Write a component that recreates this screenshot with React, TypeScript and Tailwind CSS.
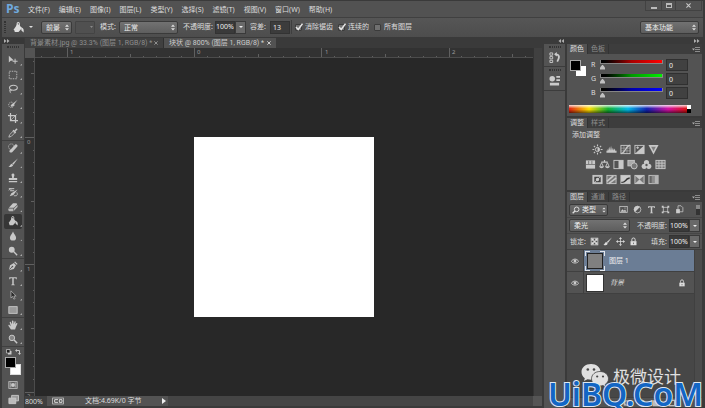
import React from "react";
import type { ReactNode } from "react";

const FONT = "font-['Noto_Sans','Noto_Sans_CJK_SC',sans-serif]";

function Glyph({ children, className = "size-[11px]", box = 12 }: { children: ReactNode; className?: string; box?: number }) {
  return (
    <svg viewBox={`0 0 ${box} ${box}`} className={`shrink-0 ${className}`} fill="none" stroke="currentColor" strokeWidth="1" aria-hidden="true">
      {children}
    </svg>
  );
}

const F = { fill: "currentColor", stroke: "none" };

const bucket = (
  <>
    <path d="M5 2 10 6.500 6 11H2L1 8z" {...F} />
    <path d="M4.500 6V1.800a1.200 1.200 0 0 1 2.400 0V5" strokeWidth="1.200" />
    <path d="M9.300 6c2.500 1 2.700 3 2.200 5.500L9 9z" {...F} />
  </>
);

type Tool = { name: string; icon: ReactNode };

const toolGroups: { height: string; tools: Tool[] }[] = [
  {
    height: "h-[88px]",
    tools: [
      { name: "移动", icon: <><path d="M1 1v8l2.200-2L7 6.500z" {...F} /><path d="M8.500 4.500v6M5.500 7.500h6" strokeWidth="1.200" /></> },
      { name: "选框", icon: <rect x="1.500" y="1.500" width="9" height="9" strokeDasharray="1.800 1.200" /> },
      { name: "套索", icon: <><ellipse cx="6.500" cy="4.500" rx="4.700" ry="3" strokeWidth="1.300" /><path d="M2.500 6.500c-1.500 1 .5 2.500 1.500 1.500s-1-2-1.500-.5c-.5 1.500 0 2.500 1 3.500" /></> },
      { name: "快速选择", icon: <><circle cx="4" cy="7" r="3.200" strokeDasharray="1.400 1" /><path d="M11.500 1 7 7 4 9.500 4.500 6.500z" {...F} /><path d="M3 8c2 2 4 1 4.500-1L5.500 5.500z" {...F} /></> },
      { name: "裁剪", icon: <><path d="M3 0v9h9M0 3h9v9" strokeWidth="1.500" /><path d="M3.500 8.500 10.500 1.500" strokeWidth=".8" /></> },
      { name: "吸管", icon: <><path d="M1 11l1-3 4-4 2 2-4 4z" strokeWidth="1" /><path d="M5.500 3l1.200-.8L8 3l1.500-2c1-1 2.500.5 1.500 1.500L9 4l.8 1.300L8.500 6.500z" {...F} /></> },
    ],
  },
  {
    height: "h-[118px]",
    tools: [
      { name: "修复画笔", icon: <><circle cx="4" cy="4.500" r="3.400" strokeDasharray="1.400 1" /><path d="M2 9 8.500 2c1.500-1.500 4 1 2.500 2.500L5 11c-1.500 1.500-4.500-.5-3-2z" {...F} /></> },
      { name: "画笔", icon: <><path d="M11.800.5 6.500 8 5 6.500z" {...F} /><path d="M4.500 6.800 6.200 8.500C5.500 11 3 11 .5 10.800 2.500 10 2 7.500 4.500 6.800z" {...F} /></> },
      { name: "图章", icon: <path d="M4.300 1.500c1-1.500 3-1 3.400.5.200 1-.7 2-.7 4h4v2.500H1V6h4c0-2-1-3-.7-4.500zM1 9.500h10V11H1z" {...F} /> },
      { name: "历史画笔", icon: <><path d="M11.500 3 6.500 9.500 2 11l2-3.500z" {...F} /><path d="M1 2h6.500M2.500 4.500h5M1 4c1-2 2-2 3-1" strokeWidth="1.200" /><path d="M7 10.500h3c1.500-1 1.500-2.500.5-4" /></> },
      { name: "橡皮擦", icon: <><path d="M6 1.500h3.500c1.500 0 2 1 1 2L7 7H1z" {...F} /><path d="M.5 7.700h6V11H2C.5 11 0 9 .5 7.700zM7.300 7.500 11.500 3.500v2.500L7.300 10.500z" {...F} opacity=".85" /></> },
      { name: "油漆桶", icon: bucket },
      { name: "模糊", icon: <path d="M6 .5C7 4 9.700 5 9.700 8a3.700 3.500 0 0 1-7.400 0C2.300 5 5 4 6 .5z" {...F} /> },
      { name: "减淡", icon: <><circle cx="4.500" cy="4.500" r="3.500" {...F} /><path d="M7 7l4 4" strokeWidth="1.600" /></> },
    ],
  },
  {
    height: "h-[59px]",
    tools: [
      { name: "钢笔", icon: <><path d="M1 11 2.500 5 7 2.500 9.500 5 7 9.500z" {...F} /><path d="M7.500 1.500 8.500.5l3 3-1 1z" {...F} /><path d="M1.500 10.500 5 7" stroke="#535353" /><circle cx="5.300" cy="6.700" r="1" fill="#535353" stroke="none" /></> },
      { name: "文字", icon: <path d="M1.500 1.500h9V4h-.8L9 2.700H6.900V10l1.200.5v.5H3.900v-.5l1.200-.5V2.700H3L2.300 4h-.8z" {...F} /> },
      { name: "路径选择", icon: <path d="M3.500 1v8.500l2-1.800L7 11l1.500-.7L7 7.200h2.800z" fill="#2a2a2a" stroke="#c4c4c4" strokeWidth=".8" /> },
      { name: "矩形", icon: <rect x="1" y="2" width="10" height="8" fill="#9a9a9a" stroke="#cfcfcf" /> },
    ],
  },
  {
    height: "h-[29px]",
    tools: [
      { name: "抓手", icon: <path d="M3.500 11.500.5 6.800c-.3-1 .9-1.300 1.500-.6L3.300 7.500 2 3c-.2-1.100 1.200-1.300 1.500-.4L4.800 5 4.700 1.300c.1-1.100 1.600-1.100 1.800 0L6.800 5l1-3c.4-.9 1.600-.6 1.500.4L8.700 5.500l1.200-1.700c.7-.7 1.700-.1 1.300.9L9.500 8.500l-1 3z" {...F} /> },
      { name: "缩放", icon: <><circle cx="4.700" cy="4.700" r="3.300" fill="#858585" strokeWidth="1.200" /><path d="M7.300 7.300l3.700 3.700" strokeWidth="1.800" /></> },
    ],
  },
];

const menus = ["文件(F)", "编辑(E)", "图像(I)", "图层(L)", "类型(Y)", "选择(S)", "滤镜(T)", "视图(V)", "窗口(W)", "帮助(H)"];

function Select({ label, value, className }: { label: string; value: string; className: string }) {
  return (
    <div className={`relative h-[13px] shrink-0 ${className}`}>
      <select
        aria-label={label}
        className="block h-full w-full appearance-none rounded-[2px] border border-[#3a3a3a] bg-linear-to-b from-[#727272] to-[#5e5e5e] pl-1 leading-none text-[#eee] outline-none"
      >
        <option>{value}</option>
      </select>
      <svg viewBox="0 0 4 7" className="pointer-events-none absolute top-[3px] right-[3px] h-[7px] w-1 fill-[#ddd]">
        <path d="M0 2.700 2 .5l2 2.200zM0 4.300h4L2 6.500z" />
      </svg>
    </div>
  );
}

function PercentField({ label }: { label: string }) {
  return (
    <div className="flex h-[13px] w-[31px] shrink-0 items-stretch">
      <input aria-label={label} defaultValue="100%" className="w-5 min-w-0 border border-[#333] bg-[#3a3a3a] text-center text-[#eee] outline-none" />
      <button aria-label={`${label}滑块`} className="flex flex-1 items-center justify-center border border-[#3a3a3a] bg-[#696969]">
        <svg viewBox="0 0 4 2" className="h-[2px] w-1 fill-[#eee]"><path d="M0 0h4L2 2z" /></svg>
      </button>
    </div>
  );
}

function Check({ label, checked = false }: { label: string; checked?: boolean }) {
  return (
    <label className="flex shrink-0 items-center gap-[3px]">
      <span className="relative flex">
        <input type="checkbox" defaultChecked={checked} className="peer size-[7px] appearance-none rounded-[1px] border border-[#3b3b3b] bg-[#707070]" />
        <svg viewBox="0 0 8 8" className="pointer-events-none absolute -top-[1px] left-0 hidden size-2 fill-none stroke-[#e4e4e4] stroke-[1.5] peer-checked:block">
          <path d="M1 4l2.200 2.500L7.500.7" />
        </svg>
      </span>
      {label}
    </label>
  );
}

function Chevrons({ flip = false }: { flip?: boolean }) {
  return (
    <svg viewBox="0 0 6 4" className={`h-1 w-[6px] fill-[#b0b0b0] ${flip ? "rotate-180" : ""}`} aria-hidden="true">
      <path d="M0 0l2.500 2L0 4zM3 0l2.500 2L3 4z" />
    </svg>
  );
}

const UNIT = 127.3;

function TopRuler() {
  const ticks: ReactNode[] = [];
  for (let i = -12; i < 28; i++) {
    const x = Math.round(159 + (i * UNIT) / 10) + 0.5;
    const len = i % 10 === 0 ? 10 : i % 5 === 0 ? 4 : 2;
    ticks.push(<path key={i} d={`M${x} ${10 - len}V10`} />);
  }
  return (
    <svg className="h-[10px] min-w-0 flex-1 border-b border-[#4c4c4c] bg-[#323232]" aria-label="水平标尺">
      <g stroke="#606060">{ticks}</g>
      <g fill="#999" className="text-[6px]">
        <text x="35" y="6">1</text>
        <text x="162" y="6">0</text>
        <text x="290" y="6">1</text>
        <text x="417" y="6">2</text>
      </g>
    </svg>
  );
}

function SideRuler() {
  const ticks: ReactNode[] = [];
  for (let i = -6; i < 21; i++) {
    const y = Math.round(79 + (i * UNIT) / 10) + 0.5;
    const len = i % 10 === 0 ? 10 : i % 5 === 0 ? 4 : 2;
    ticks.push(<path key={i} d={`M${10 - len} ${y}H10`} />);
  }
  return (
    <svg className="w-[10px] shrink-0 self-stretch border-r border-[#4c4c4c] bg-[#323232]" aria-label="垂直标尺">
      <g stroke="#606060">{ticks}</g>
      <g fill="#999" className="text-[6px]">
        <text x="2" y="86">0</text>
        <text x="2" y="213">1</text>
        <text x="2" y="340">2</text>
      </g>
    </svg>
  );
}

function PanelTabs({ tabs }: { tabs: string[] }) {
  return (
    <div className="flex h-[10px] items-stretch bg-[#3d3d3d]">
      {tabs.map((t, i) => (
        <button key={t} className={`flex w-[21px] items-center justify-center border-r border-[#333] ${i === 0 ? "bg-[#535353] text-[#ddd]" : "text-[#8d8d8d]"}`}>
          {t}
        </button>
      ))}
      <button aria-label="面板菜单" className="mr-[2px] ml-auto flex items-center">
        <svg viewBox="0 0 8 5" className="h-[5px] w-2 fill-none stroke-[#8c8c8c]">
          <path d="M3 .5h5M3 2.500h5M3 4.500h5" /><path d="M0 1.500h3L1.500 3.500z" fill="#aaa" stroke="none" />
        </svg>
      </button>
    </div>
  );
}

function ColorRow({ name, track }: { name: string; track: string }) {
  return (
    <div className="flex h-3 items-center">
      <label htmlFor={`c-${name}`} className="w-[9px] text-[#ddd]">{name}</label>
      <div className="relative h-[10px] w-[63px]">
        <div className={`h-1 border-x border-b border-[#858585] ${track}`} />
        <input
          id={`c-${name}`}
          type="range"
          min="0"
          max="255"
          defaultValue="0"
          className="absolute inset-0 h-[10px] w-full appearance-none bg-transparent [&::-webkit-slider-thumb]:mt-[4px] [&::-webkit-slider-thumb]:size-[5px] [&::-webkit-slider-thumb]:appearance-none [&::-webkit-slider-thumb]:bg-[#c0c0c0] [&::-webkit-slider-thumb]:[clip-path:polygon(50%_0,100%_60%,100%_100%,0_100%,0_60%)]"
        />
      </div>
      <input aria-label={`${name} 数值`} defaultValue="0" className="ml-[3px] h-3 w-[22px] border border-[#303030] bg-[#414141] pl-[2px] text-[#eee] outline-none" />
    </div>
  );
}

const adjustRows: { name: string; icon: ReactNode }[][] = [
  [
    { name: "亮度/对比度", icon: <><circle cx="6" cy="6" r="2.300" /><path d="M6 3.700a2.300 2.300 0 0 1 0 4.600z" {...F} /><path d="M6 .5v2M6 9.500v2M.5 6h2M9.500 6h2M2 2l1.400 1.400M8.600 8.600 10 10M2 10l1.400-1.400M8.600 3.400 10 2" strokeWidth="1.200" /></> },
    { name: "色阶", icon: <path d="M.5 9.500V7l1 1V5.500l1 1.500 1-4 1 4 1-5 1 5 1-3 1 3 1-2 1 3 1-1v2.500z" {...F} /> },
    { name: "曲线", icon: <><rect x="1" y="1.500" width="10" height="9" /><path d="M1 4.500h10M1 7.500h10M4.300 1.500v9M7.600 1.500v9" strokeWidth=".5" /><path d="M1 10.500C6 10 6 2 11 1.500" strokeWidth="1.300" /></> },
    { name: "曝光度", icon: <><rect x="1" y="1.500" width="10" height="9" /><path d="M1 10.500 11 1.500v9z" {...F} /><path d="M2.500 4h3M4 2.500v3" /></> },
    { name: "自然饱和度", icon: <><path d="M.5 1h11L6 11.500z" {...F} /><path d="M3.500 3h5L6 8z" fill="#808080" stroke="none" /></> },
  ],
  [
    { name: "色相/饱和度", icon: <><rect x="1" y="1.500" width="10" height="9" {...F} /><path d="M1 6h10M4 2v4M7.500 2v4" stroke="#777" /></> },
    { name: "色彩平衡", icon: <><path d="M6 1v3M2.500 3.500h7" strokeWidth="1.300" /><path d="M2.800 4 .8 8.500h4zM9.200 4 7.200 8.500h4z" /><path d="M.5 8.500h4.600c-.5 2-4 2-4.600 0zM6.900 8.500h4.600c-.5 2-4 2-4.600 0z" {...F} /></> },
    { name: "黑白", icon: <><rect x="1" y="1.500" width="10" height="9" /><path d="M6 1.500h5v9H6z" {...F} /></> },
    { name: "照片滤镜", icon: <><rect x="1" y="1.500" width="7" height="6" fill="#aaa" /><circle cx="7.800" cy="7.500" r="3.300" fill="#777" /></> },
    { name: "通道混合器", icon: <><circle cx="6" cy="3.800" r="2.800" {...F} /><circle cx="3.500" cy="8" r="2.800" {...F} /><circle cx="8.500" cy="8" r="2.800" {...F} /><circle cx="6" cy="6.500" r="1.300" fill="#555" stroke="none" /></> },
    { name: "颜色查找", icon: <><rect x="1" y="1.500" width="10" height="9" fill="#777" /><path d="M1 4.500h10M1 7.500h10M4.300 1.500v9M7.600 1.500v9" /></> },
  ],
  [
    { name: "反相", icon: <><rect x="1" y="1.500" width="10" height="9" fill="#c6c6c6" /><path d="M2.500 9V3h6zM9.500 3v6h-6z" fill="#444" stroke="none" /><circle cx="6" cy="6" r="1.800" {...F} /></> },
    { name: "色调分离", icon: <><rect x="1" y="1.500" width="10" height="9" fill="#777" /><path d="M1 8 8 2M3 10.500l8-6" strokeWidth="1.800" /></> },
    { name: "阈值", icon: <><rect x="1" y="1.500" width="10" height="9" fill="#ccc" /><path d="M1.500 8.500c5 0 3.500-4 9-5v2C6.500 6 7 9.800 1.500 9.800z" fill="#333" stroke="none" /></> },
    { name: "可选颜色", icon: <><rect x="1" y="1.500" width="10" height="9" fill="#777" /><path d="M1 1.500h10L6 6zM1 10.500h10L6 6z" {...F} /></> },
    { name: "渐变映射", icon: <><rect x="1" y="1.500" width="10" height="9" fill="#666" /><path d="M4 2h7v8H4z" fill="#8c8c8c" stroke="none" /><path d="M7.500 2H11v8H7.500z" fill="#b5b5b5" stroke="none" /></> },
  ],
];

const pictureIcon = <><rect x="1" y="2" width="10" height="8" /><path d="M2 9l2.500-3.500L6.500 7.500 8 6l2 3z" {...F} /><circle cx="8" cy="4" r=".8" {...F} /></>;
const lockIcon = <><path d="M2 5.500h8V11H2z" {...F} /><path d="M3.800 5.500V3.500a2.200 2.200 0 0 1 4.400 0v2" strokeWidth="1.300" /><path d="M6 7.500v2" stroke="#555" /></>;

const filters: { name: string; icon: ReactNode }[] = [
  { name: "像素图层", icon: pictureIcon },
  { name: "调整图层", icon: <><circle cx="6" cy="6" r="4.500" /><path d="M2.800 9.200 9.200 2.800A4.500 4.500 0 0 0 2.800 9.200z" {...F} /></> },
  { name: "文字图层", icon: <path d="M1.500 1.500h9V4h-.8L9 2.900H7V10l1.200.5v.5H3.800v-.5L5 10V2.900H3L2.300 4h-.8z" {...F} /> },
  { name: "形状图层", icon: <><rect x="3" y="3" width="6" height="6" /><path d="M1 1h2.500v2.500H1zM8.500 1H11v2.500H8.500zM1 8.500h2.500V11H1zM8.500 8.500H11V11H8.500z" {...F} /></> },
  { name: "智能对象", icon: <><path d="M4 1h4l2.500 2.500V9H4z" /><path d="M1.500 5.500h5V11h-5z" {...F} /></> },
];

const locks: { name: string; icon: ReactNode }[] = [
  { name: "锁定透明像素", icon: <><rect x="1.500" y="1.500" width="9" height="9" /><path d="M2 2h3v3H2zM7 2h3v3H7zM4.500 4.500h3v3h-3zM2 7h3v3H2zM7 7h3v3H7z" {...F} /></> },
  { name: "锁定图像像素", icon: <><path d="M11.800.5 6.500 8 5 6.500z" {...F} /><path d="M4.500 6.800 6.200 8.500C5.500 11 3 11 .5 10.800 2.500 10 2 7.500 4.500 6.800z" {...F} /></> },
  { name: "锁定位置", icon: <><path d="M6 2v8M2 6h8" /><path d="M6 0l2 2.500H4zM6 12l2-2.500H4zM0 6l2.500-2v4zM12 6 9.500 4v4z" {...F} /></> },
  { name: "锁定全部", icon: lockIcon },
];

function Eye() {
  return (
    <button aria-label="图层可见性" className="flex w-[17px] shrink-0 items-center justify-center border-r border-[#404040] bg-[#535353] text-[#ccc]">
      <Glyph className="size-2"><path d="M.5 6.500c2.500-4.500 8.500-4.500 11 0-2.500 3.500-8.500 3.500-11 0z" strokeWidth="1.300" /><circle cx="6" cy="6" r="2.200" {...F} /></Glyph>
    </button>
  );
}

function Grip() {
  return <div className="mx-auto h-[2px] w-3 border-y border-dotted border-[#333]" />;
}

export default function App() {
  return (
    <div className={`relative flex min-h-screen flex-col border-x-2 border-t border-[#3a3a3a] bg-[#3a3a3a] text-[7px] leading-[10px] text-[#ddd] ${FONT}`}>
      <header className="flex h-[17px] shrink-0 items-center border-b border-[#404040] bg-[#525252]">
        <span className="ml-1 w-[22px] font-['Open_Sans',sans-serif] text-[12px] leading-4 font-bold text-[#70a9dd]">Ps</span>
        <nav className="flex gap-[9px] pt-[2px]">
          {menus.map((m) => <button key={m} className="whitespace-nowrap">{m}</button>)}
        </nav>
        <div className="mr-px ml-auto flex h-[10px] self-start border border-t-0 border-[#424242] text-[#c8c8c8]">
          <button aria-label="最小化" className="flex w-4 items-center justify-center border-r border-[#424242]"><span className="mt-1 h-[2px] w-[6px] bg-[#bbb]" /></button>
          <button aria-label="还原" className="flex w-[14px] items-center justify-center border-r border-[#424242]"><span className="h-[5px] w-[6px] border border-t-2 border-[#bbb]" /></button>
          <button aria-label="关闭" className="flex w-[25px] items-center justify-center"><Glyph className="size-[5px]"><path d="M1 1l10 10M11 1 1 11" strokeWidth="2.500" /></Glyph></button>
        </div>
      </header>

      <div className="flex h-5 shrink-0 items-center border-b border-[#3a3a3a] bg-linear-to-b from-[#565656] to-[#4d4d4d] pr-1 pb-px">
        <div className="ml-[2px] h-3 w-[2px] border-x border-dotted border-[#333]" />
        <button aria-label="油漆桶工具" className="ml-[7px] flex items-center gap-1 text-[#ddd]">
          <Glyph>{bucket}</Glyph>
          <svg viewBox="0 0 4 2" className="ml-px h-[2px] w-1 fill-[#ddd]"><path d="M0 0h4L2 2z" /></svg>
        </button>
        <div className="ml-2 flex items-center gap-[3px]">
          <Select label="填充区域的源" value="前景" className="w-[31px]" />
          <button aria-label="图案拾色器" className="flex h-[13px] w-5 items-center justify-end rounded-[1px] border border-[#444] bg-[#505050] pr-px">
            <svg viewBox="0 0 3 2" className="h-[2px] w-[3px] fill-[#888]"><path d="M0 0h3L1.500 2z" /></svg>
          </button>
        </div>
        <div className="ml-[5px] flex items-center gap-[2px]"><span className="w-[17px] whitespace-nowrap">模式:</span><Select label="模式" value="正常" className="w-[59px]" /></div>
        <div className="ml-[5px] flex items-center gap-px"><span className="w-[31px] whitespace-nowrap">不透明度:</span><PercentField label="不透明度" /></div>
        <div className="ml-1 flex items-center gap-[2px]">
          <label htmlFor="tolerance" className="w-[18px] whitespace-nowrap">容差:</label>
          <input id="tolerance" defaultValue="13" className="h-[13px] w-5 border border-[#333] bg-[#3c3c3c] pl-[2px] text-[#eee] outline-none" />
        </div>
        <div className="ml-px h-[14px] w-px bg-[#3e3e3e]" />
        <div className="ml-[3px] flex gap-[5px] whitespace-nowrap">
          <Check label="消除锯齿" checked />
          <Check label="连续的" checked />
          <Check label="所有图层" />
        </div>
        <div className="ml-auto"><Select label="工作区" value="基本功能" className="w-[59px]" /></div>
      </div>

      <div className="flex min-h-0 flex-1">
        <aside className="flex w-[22px] shrink-0 flex-col bg-[#535353] text-[#c8c8c8]">
          <div className="flex h-[6px] shrink-0 items-center bg-[#383838] pl-[2px]"><Chevrons /></div>
          <div className="h-[9px] shrink-0 pt-[2px]"><Grip /></div>
          {toolGroups.map((g) => (
            <div key={g.height} className={`flex shrink-0 flex-col border-b border-[#404040] last-of-type:border-0 ${g.height}`}>
              {g.tools.map((t) => (
                <button key={t.name} aria-label={t.name} className={`relative mx-[2px] flex flex-1 items-center justify-center rounded-[2px] pr-px ${t.name === "油漆桶" ? "bg-[#363636]" : ""}`}>
                  <Glyph className="size-[10px]">{t.icon}</Glyph>
                  <span className="absolute right-0 bottom-[2px] size-[2px] bg-[#aaa] [clip-path:polygon(100%_0,100%_100%,0_100%)]" />
                </button>
              ))}
            </div>
          ))}
          <div className="flex h-[10px] shrink-0 items-center justify-around px-[2px]">
            <Glyph className="size-[6px]"><path d="M4 4h7v7H4z" {...F} /><path d="M1 1h7v7H1z" fill="#222" strokeWidth="1.500" /></Glyph>
            <Glyph className="size-[6px]"><path d="M3 3h6v6" strokeWidth="2" /><path d="M0 3l4-3v6zM9 12 6 8h6z" {...F} /></Glyph>
          </div>
          <div className="relative ml-[3px] h-[18px] w-4 shrink-0">
            <button aria-label="背景色" className="absolute right-0 bottom-0 size-[11px] border border-[#ddd] bg-white" />
            <button aria-label="前景色" className="absolute top-0 left-0 size-[11px] border border-[#aaa] bg-black" />
          </div>
          <button aria-label="快速蒙版" className="mx-auto mt-1 flex h-[11px] shrink-0 items-center"><Glyph className="size-[10px]"><rect x="1" y="2" width="10" height="8" /><path d="M2 3h2v6H2zM8 3h2v6H8z" {...F} opacity=".6" /><circle cx="6" cy="6" r="2.300" {...F} /></Glyph></button>
          <button aria-label="屏幕模式" className="mx-auto mt-1 flex h-[11px] shrink-0 items-center"><Glyph className="size-[11px]"><path d="M4 1.500h7.500v6H4z" fill="#999" /><path d="M1 4.500h7.500v6H1z" fill="#bbb" /></Glyph></button>
        </aside>

        <main className="ml-px flex min-w-0 flex-1 flex-col">
          <div className="flex h-[10px] shrink-0 bg-[#3a3a3a] font-['Roboto','Noto_Sans_CJK_SC',sans-serif]">
            <button className="flex w-[139px] items-center justify-between border-r border-[#303030] bg-[#404040] px-[5px] whitespace-nowrap text-[#8f8f8f]"><span>背景素材.jpg @ 33.3% (图层 1, RGB/8) *</span><Glyph className="size-1"><path d="M1 1l10 10M11 1 1 11" strokeWidth="3" /></Glyph></button>
            <button className="flex w-[112px] items-center justify-between bg-[#525252] px-[5px] whitespace-nowrap text-[#ccc]"><span>块状 @ 800% (图层 1, RGB/8) *</span><Glyph className="size-1"><path d="M1 1l10 10M11 1 1 11" strokeWidth="3" /></Glyph></button>
          </div>
          <div className="flex min-h-0 flex-1">
            <div className="flex min-w-0 flex-1 flex-col">
              <div className="flex"><div className="size-[10px] shrink-0 bg-[#545454]" /><TopRuler /></div>
              <div className="flex min-h-0 flex-1">
                <SideRuler />
                <div className="min-w-0 flex-1 bg-[#282828] pt-[79px] pl-[159px]"><div className="size-[180px] bg-white" /></div>
              </div>
            </div>
            <div className="w-[9px] shrink-0 border-l border-[#333] bg-[#404040]" />
          </div>
          <div className="flex h-[10px] shrink-0 items-center bg-[#454545]">
            <div className="flex h-full w-[143px] items-center bg-[#535353]">
              <input aria-label="缩放比例" defaultValue="800%" className="h-full w-[22px] bg-[#404040] text-[#ddd] outline-none" />
              <Glyph className="ml-[5px] h-2 w-3"><rect x="-2" y="1.500" width="16" height="9" /><path d="M6 4H1v4h5M8 4h4v4H8z" strokeWidth="1.500" /></Glyph>
              <span className="ml-[21px] flex-1 whitespace-nowrap">文档:4.69K/0 字节</span>
              <svg viewBox="0 0 4 6" className="mr-[2px] h-[6px] w-1 fill-[#eee]"><path d="M0 0l4 3-4 3z" /></svg>
            </div>
            <div className="ml-auto h-full w-[9px] bg-[#555]" />
          </div>
          <div className="h-[2px] shrink-0" />
        </main>

        <aside className="ml-[2px] flex w-[158px] shrink-0 flex-col">
          <div className="flex h-[6px] shrink-0 items-center justify-between pr-[2px] pl-[14px]"><Chevrons flip /><Chevrons /></div>
          <div className="flex min-h-0 flex-1">
            <div className="w-[21px] shrink-0 bg-[#535353] text-[#ccc]">
              <div className="h-[23px] border-b border-[#3c3c3c] pt-[2px]"><Grip />
                <button aria-label="历史记录" className="mx-auto mt-1 flex"><Glyph className="size-[11px]"><path d="M1 1h3v2.500H1zM1 5h3v2.500H1zM1 9h3v2.500H1z" strokeWidth="1" /><path d="M7 2.500c5 0 4.500 4 2 8" strokeWidth="2" /><path d="M5.500 2.500 8.500 0v5z" {...F} /></Glyph></button>
              </div>
              <div className="h-6 border-b border-[#3c3c3c] pt-[2px]"><Grip />
                <button aria-label="属性" className="mx-auto mt-1 flex"><Glyph className="size-[11px]"><circle cx="3.500" cy="4" r="3" {...F} /><path d="M8 1h4v2H8zM8 4.500h4v2H8zM1 8.500h10v3H1z" {...F} /></Glyph></button>
              </div>
            </div>

            <div className="ml-[2px] flex min-w-0 flex-1 flex-col gap-[2px] pb-px">
              <section className="h-[72px] shrink-0 bg-[#535353]">
                <PanelTabs tabs={["颜色", "色板"]} />
                <div className="flex pt-[5px] pl-[3px]">
                  <div className="relative h-4 w-[21px]">
                    <button aria-label="背景色" className="absolute top-[7px] left-[6px] size-[10px] bg-white" />
                    <button aria-label="前景色" className="absolute top-px left-0 size-[11px] border border-[#aaa] bg-black" />
                  </div>
                  <div className="flex flex-col gap-[2px]">
                    <ColorRow name="R" track="bg-linear-to-r from-black via-[#a00] to-[#f00]" />
                    <ColorRow name="G" track="bg-linear-to-r from-black via-[#090] to-[#0e0]" />
                    <ColorRow name="B" track="bg-linear-to-r from-black via-[#00a] to-[#00f]" />
                  </div>
                </div>
                <div className="mt-[6px] ml-[2px] flex h-2 w-[122px]">
                  <div className="flex-1 [background-image:linear-gradient(to_bottom,rgba(255,255,255,.85),transparent_45%,transparent_55%,rgba(0,0,0,.55)),linear-gradient(to_right,#e02010,#ffe000_17%,#10b030_33%,#00b8e8_50%,#1020b0_66%,#d010a0_84%,#e01010)]" />
                  <div className="w-1 bg-linear-to-b from-white from-50% to-black to-50%" />
                </div>
              </section>

              <section className="h-[72px] shrink-0 bg-[#535353]">
                <PanelTabs tabs={["调整", "样式"]} />
                <h2 className="pt-[2px] pl-[5px]">添加调整</h2>
                <div className="mt-1 flex flex-col gap-1 pr-[18px] text-[#c8c8c8]">
                  {adjustRows.map((row, i) => (
                    <div key={i} className="flex justify-center gap-[3px]">
                      {row.map((a) => <button key={a.name} aria-label={a.name}><Glyph>{a.icon}</Glyph></button>)}
                    </div>
                  ))}
                </div>
              </section>

              <section className="flex min-h-0 flex-1 flex-col bg-[#535353]">
                <PanelTabs tabs={["图层", "通道", "路径"]} />
                <div className="flex h-4 shrink-0 items-center border-b border-[#464646] pr-[2px] pl-[2px]">
                  <div className="relative h-3 w-[39px] text-[#ddd]">
                    <select aria-label="图层过滤" className="block h-full w-full appearance-none rounded-[2px] border border-[#3a3a3a] bg-linear-to-b from-[#6a6a6a] to-[#5a5a5a] pl-3 text-[#eee] outline-none"><option>类型</option></select>
                    <Glyph className="pointer-events-none absolute top-[2px] left-[3px] size-2"><circle cx="7" cy="5" r="3.500" strokeWidth="1.500" /><path d="M4.500 7.500 1 11" strokeWidth="2" /></Glyph>
                    <svg viewBox="0 0 4 7" className="pointer-events-none absolute top-[3px] right-[2px] h-[6px] w-1 fill-[#ddd]"><path d="M0 2.700 2 .5l2 2.200zM0 4.300h4L2 6.500z" /></svg>
                  </div>
                  <div className="ml-[11px] flex gap-1 text-[#ccc]">
                    {filters.map((f) => <button key={f.name} aria-label={f.name} className="w-[10px]"><Glyph className="size-[9px]">{f.icon}</Glyph></button>)}
                  </div>
                  <button aria-label="打开图层过滤" className="ml-auto h-[10px] w-1 bg-[#333] pb-[6px]"><span className="block h-1 bg-[#888]" /></button>
                </div>
                <div className="flex h-4 shrink-0 items-center border-b border-[#464646] pr-[2px] pl-[2px]">
                  <Select label="混合模式" value="柔光" className="w-[61px]" />
                  <span className="ml-auto w-[32px] whitespace-nowrap">不透明度:</span>
                  <PercentField label="图层不透明度" />
                </div>
                <div className="flex h-4 shrink-0 items-center border-b border-[#404040] pr-[2px] pl-[3px]">
                  <span className="w-5 whitespace-nowrap">锁定:</span>
                  <div className="flex gap-[3px] text-[#ddd]">
                    {locks.map((l) => <button key={l.name} aria-label={l.name} className="w-[10px]"><Glyph className="size-[9px]">{l.icon}</Glyph></button>)}
                  </div>
                  <span className="ml-auto w-[18px] whitespace-nowrap">填充:</span>
                  <PercentField label="填充" />
                </div>
                <div className="flex min-h-0 flex-1">
                  <ul className="min-w-0 flex-1 bg-[#474747]">
                    <li className="flex h-[22px] border-b border-[#404040]">
                      <Eye />
                      <button className="flex flex-1 items-center gap-1 bg-[#6b7d95] pl-px text-[#eee]">
                        <span className="relative block size-5 border border-[#e4e8ee] p-px">
                          <span className="block size-full border border-[#222] bg-[#808080]" />
                          <span className="absolute inset-x-1 -top-px h-px bg-[#6b7d95]" />
                          <span className="absolute inset-x-1 -bottom-px h-px bg-[#6b7d95]" />
                          <span className="absolute inset-y-1 -left-px w-px bg-[#6b7d95]" />
                          <span className="absolute inset-y-1 -right-px w-px bg-[#6b7d95]" />
                        </span>
                        图层 1
                      </button>
                    </li>
                    <li className="flex h-[22px] border-b border-[#404040]">
                      <Eye />
                      <button className="flex flex-1 items-center gap-[6px] bg-[#535353] pr-2 pl-[2px] text-[#ddd]">
                        <span className="block size-[18px] border border-[#333] bg-white" />
                        <span className="italic">背景</span>
                        <Glyph className="ml-auto size-2">{lockIcon}</Glyph>
                      </button>
                    </li>
                  </ul>
                  <div className="w-2 shrink-0 border-l border-[#404040] bg-[#4b4b4b]" />
                </div>
                <footer className="flex h-[10px] shrink-0 items-center justify-center gap-[7px] border-t border-[#404040] text-[#bbb]">
                  <button aria-label="链接图层"><Glyph className="size-2"><path d="M5 4H3a2 2 0 0 0 0 4h2M7 4h2a2 2 0 0 1 0 4H7M4 6h4" strokeWidth="1.500" /></Glyph></button>
                  <button aria-label="图层样式"><Glyph className="size-2"><path d="M5 2C3 1 3 4 2.500 6S2 10 .5 10M1 5h4M6 5l4 5M10 5l-4 5" strokeWidth="1.300" /></Glyph></button>
                  <button aria-label="添加蒙版"><Glyph className="size-2"><rect x="1" y="2" width="10" height="8" {...F} /><circle cx="6" cy="6" r="2.500" fill="#555" stroke="none" /></Glyph></button>
                  <button aria-label="新建调整图层"><Glyph className="size-2">{filters[1].icon}</Glyph></button>
                  <button aria-label="新建组"><Glyph className="size-2"><path d="M0 2h5l1 2h6v7H0z" {...F} /></Glyph></button>
                  <button aria-label="新建图层"><Glyph className="size-2"><rect x="2" y="2" width="8" height="8" strokeWidth="2" /></Glyph></button>
                </footer>
              </section>
            </div>
          </div>
        </aside>
        <div className="w-px shrink-0" />
      </div>

      <div className="pointer-events-none absolute right-[22px] bottom-5 flex items-center gap-1 text-[#e0e0e0]">
        <svg viewBox="0 0 28 25" className="h-[25px] w-7">
          <path d="M10 1C4.500 1 .5 4.500.5 9c0 2.600 1.300 4.700 3.300 6.200L3 18l3.500-1.700c1.200.3 2.300.5 3.500.5 5.500 0 9.500-3.500 9.500-7.900S15.500 1 10 1z" fill="#e0e0e0" />
          <path d="M19 8.500c-5 0-8.500 3.200-8.500 7.300S14 23 19 23c1 0 2-.2 2.900-.5L25 24l-.8-2.600c2-1.300 3.300-3.300 3.300-5.600 0-4.100-3.500-7.300-8.500-7.300z" fill="#e0e0e0" stroke="#474747" strokeWidth=".8" />
          <g fill="#474747"><circle cx="6.800" cy="6.500" r="1.300" /><circle cx="13" cy="6.500" r="1.300" /><circle cx="16.200" cy="13.500" r="1.100" /><circle cx="22" cy="13.500" r="1.100" /></g>
        </svg>
        <span className="font-['Noto_Sans_CJK_SC',sans-serif] text-[17px] leading-5">极微设计</span>
      </div>
      <div className="pointer-events-none absolute right-0 bottom-0 font-['Noto_Sans',sans-serif] text-[32px] leading-7 font-semibold text-[#1366c4] [paint-order:stroke_fill] [-webkit-text-stroke:2px_#dfe8f3]">UiBQ.CoM</div>
    </div>
  );
}
